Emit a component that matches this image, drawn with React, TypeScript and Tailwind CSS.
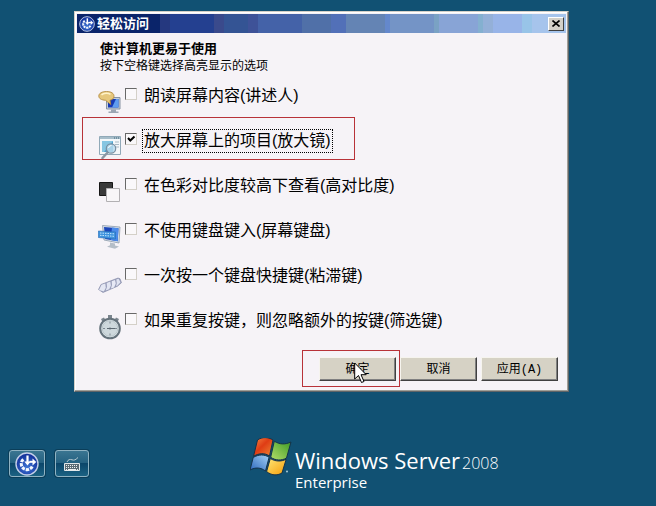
import { useState, type ReactNode } from "react";

function EaseEmblem({ id }: { id: string }) {
  return (
    <svg viewBox="0 0 24 24" className="size-full" aria-hidden="true">
      <defs>
        <radialGradient id={id} cx="50%" cy="65%" r="60%">
          <stop offset="0" stopColor="#3d74d4" />
          <stop offset="1" stopColor="#12309a" />
        </radialGradient>
      </defs>
      <circle cx="12" cy="12" r="11" fill={`url(#${id})`} stroke="#c3cfe8" strokeWidth="1.4" />
      <path d="M17.200 14.500A5.800 5.800 0 1 1 9 6.900" fill="none" stroke="#f4f8ff" strokeWidth="3" strokeDasharray="3.200 1" />
      <path d="M12.500 3.500v7" fill="none" stroke="#fff" strokeWidth="2.200" />
      <path d="M9.300 9.500h6.400l-3.200 4z" fill="#fff" />
      <path d="M14.500 9.800h4" stroke="#fff" strokeWidth="2" />
      <path d="M17.500 6.500 21.300 10l-3.800 3.500z" fill="#fff" />
    </svg>
  );
}

function NarratorIcon() {
  return (
    <svg viewBox="0 0 24 24" className="size-6" aria-hidden="true">
      <path d="M8.500 7.500h13.500v11.500H8.500z" fill="#c5cfda" stroke="#8793a3" />
      <path d="M10 9h10.500v8.500H10z" fill="#1739b5" />
      <path d="M14 17.500 18 9h2.500v8.500z" fill="#5f9cf0" />
      <path d="M13 19.500h5v2h2.500V23h-10v-1.500H13z" fill="#9ba6b3" />
      <path d="M8.500 1.500c5 0 7.500 2 7.500 4.700 0 2.500-2 3.700-4 4l.8 4.300-5.300-4.200C3.500 10 .8 8.700.8 6c0-2.800 3.200-4.500 7.700-4.500z" fill="#e6c77c" stroke="#b08738" strokeWidth=".8" />
      <path d="M3.500 5c2-2.200 7-2.200 9-.6" stroke="#fff2c8" strokeWidth="1.500" fill="none" />
    </svg>
  );
}

function MagnifierIcon() {
  return (
    <svg viewBox="0 0 24 24" className="size-6" aria-hidden="true">
      <path d="M1.500 1.500h21v18h-21z" fill="#f4f8fa" stroke="#91a9b8" />
      <path d="M2 2h20v2H2z" fill="#a7bdca" />
      <path d="M16 3h5" stroke="#3d6277" strokeDasharray="1 1" />
      <path d="M4 6h11v11H4z" fill="#4c9fcb" />
      <path d="M4 6h11L6 17H4z" fill="#86c6e2" />
      <path d="M17 7h4M17 9.500h4M17 12h4" stroke="#a9bac5" />
      <path d="m10 17-5.500 6" stroke="#8b98a5" strokeWidth="2.500" strokeLinecap="round" />
      <circle cx="13" cy="13.500" r="4.700" fill="#b8dcef" fillOpacity=".85" stroke="#788fa0" strokeWidth="1.200" />
      <path d="M10.500 13a3 3 0 0 1 3-2.500" stroke="#fff" fill="none" />
    </svg>
  );
}

function ContrastIcon() {
  return (
    <svg viewBox="0 0 24 24" className="size-6" aria-hidden="true">
      <path d="M1.500 2.500h13v13h-13z" fill="#3a3a3a" stroke="#161616" />
      <path d="M8.500 8.500h13v13h-13z" fill="#f8f6f8" stroke="#b2b0b3" />
    </svg>
  );
}

function ScreenKeyboardIcon() {
  return (
    <svg viewBox="0 0 24 24" className="size-6" aria-hidden="true">
      <path d="m4.500.5 17.500 1.500-1 16-15-3z" fill="#d5dee8" stroke="#8d9bab" strokeWidth=".8" />
      <path d="m6 2 14.500 1.200-.8 13-12.500-2.200z" fill="#1b46b9" />
      <path d="m14 2.600 6.500.6-.8 13-7-1.300z" fill="#4b8bea" />
      <path d="m12 17.500 5 1v2l4 1-4 2.300-8-2 3-1.500z" fill="#b4bdc7" />
      <path d="m.3 6 17.200 1v7L.3 12.500z" fill="#3f93dd" stroke="#2769b5" strokeWidth=".6" />
      <path d="m2 8 14 .8M2 10.300l14 1" stroke="#c5e6ff" strokeDasharray="1.500 1" />
    </svg>
  );
}

function StickyKeysIcon() {
  return (
    <svg viewBox="0 0 24 24" className="size-6" aria-hidden="true">
      <path d="M.5 19.500 3 14.500 20 8l2 .7 1.500 4-4 3.500L5 22.500z" fill="#9a9fbb" stroke="#8288a6" strokeWidth=".6" />
      <path d="m3.500 14.800 3.800-1.300.5 4.300-2 3.700-4.800-1.500z" fill="#e4e7f3" />
      <path d="m8.700 13 3.600-1.400.6 4-1.700 3.700-3.500 1.300 1.300-3.500z" fill="#e2e5f2" />
      <path d="m13.700 11.200 3.300-1.300.8 3.600-1.700 3.900-3.200 1.200 1.100-3.500z" fill="#e7e9f5" />
      <path d="m18.300 9.500 2.200-.8 2 3.500-3 3.300-1.400.7.700-3z" fill="#e0e3f1" />
    </svg>
  );
}

function StopwatchIcon() {
  return (
    <svg viewBox="0 0 24 26" className="h-[26px] w-6" aria-hidden="true">
      <path d="M10 0h4v4h-4zM3 4l3-1.500 1.500 2.500-3 2zM21 4l-3-1.500L16.500 5l3 2z" fill="#7a858d" />
      <circle cx="12" cy="13.500" r="9.800" fill="#dfe7ea" stroke="#65727b" strokeWidth="2" />
      <circle cx="12" cy="13.500" r="7.800" fill="#ced8dc" stroke="#aebac0" strokeWidth=".7" />
      <path d="M12 6.500v2M12 18.500v2M5 13.500h2M17 13.500h2" stroke="#7f8a92" />
      <path d="M9 13.500h8" stroke="#5d6972" />
      <circle cx="12" cy="13.500" r="1" fill="#5d6972" />
    </svg>
  );
}

function WindowsFlag() {
  return (
    <svg viewBox="0 0 42 38" className="h-[38px] w-[42px] shrink-0" aria-hidden="true">
      <defs>
        <linearGradient id="flag-red" x1="0" y1="0" x2="1" y2="1">
          <stop offset="0" stopColor="#f58a45" />
          <stop offset=".45" stopColor="#df3c14" />
          <stop offset="1" stopColor="#ee8a35" />
        </linearGradient>
        <linearGradient id="flag-green" x1="1" y1="0" x2="0" y2="1">
          <stop offset="0" stopColor="#3c9a26" />
          <stop offset="1" stopColor="#b4de69" />
        </linearGradient>
        <linearGradient id="flag-blue" x1="0" y1="1" x2="1" y2="0">
          <stop offset="0" stopColor="#2a66bd" />
          <stop offset="1" stopColor="#a5d2f5" />
        </linearGradient>
        <linearGradient id="flag-yellow" x1="1" y1="1" x2="0" y2="0">
          <stop offset="0" stopColor="#f59c08" />
          <stop offset="1" stopColor="#ffe878" />
        </linearGradient>
      </defs>
      <g stroke="#14324a" strokeWidth="1">
        <path d="M7.500 2C12-1.200 18-1.200 23 2L19.500 18c-4.800-3.300-10.300-3-16 .3z" fill="url(#flag-red)" />
        <path d="M24.300 3.200C29.500 6.500 35 6.800 41 4L36.500 20c-5 3-11 2.500-15.800-.7z" fill="url(#flag-green)" />
        <path d="M3.200 19.500c5.500-3.300 11-3.400 15.900-.2L15.500 33C11 29.500 5.500 29 0 32z" fill="url(#flag-blue)" />
        <path d="M20.300 20.500c5 3 10.700 3.400 15.900.7L32 35c-5 3-11 2.300-15.400-1.500z" fill="url(#flag-yellow)" />
      </g>
      <circle cx="37" cy="33.500" r="1" fill="#a9cbd8" />
    </svg>
  );
}

function SmallKeyboard() {
  return (
    <svg viewBox="0 0 16 16" className="size-4" aria-hidden="true">
      <path d="M3 6c1-2.500 3-3 5-2.200S11.500 4 14 1.500" fill="none" stroke="#b7cad2" />
      <path d="M.5 7.500h15v7H.5z" fill="#5b6b74" stroke="#e3e8ea" />
      <path d="M2 9.500h12M2 11.500h12" stroke="#eef1f2" strokeDasharray="1 1" />
      <path d="M2 13.500h1m1 0h8m1 0h1" stroke="#eef1f2" />
    </svg>
  );
}

function Cursor() {
  return (
    <svg viewBox="0 0 14 22" className="pointer-events-none absolute left-[35px] top-[5px] h-[22px] w-3.5" aria-hidden="true">
      <path d="M.7 1v16l3.800-3.500 3 7 2.500-1-3-6.800h5.200z" fill="#fff" stroke="#000" />
    </svg>
  );
}

const options: { id: string; label: string; icon: ReactNode }[] = [
  { id: "narrator", label: "朗读屏幕内容(讲述人)", icon: <NarratorIcon /> },
  { id: "magnifier", label: "放大屏幕上的项目(放大镜)", icon: <MagnifierIcon /> },
  { id: "contrast", label: "在色彩对比度较高下查看(高对比度)", icon: <ContrastIcon /> },
  { id: "keyboard", label: "不使用键盘键入(屏幕键盘)", icon: <ScreenKeyboardIcon /> },
  { id: "sticky", label: "一次按一个键盘快捷键(粘滞键)", icon: <StickyKeysIcon /> },
  { id: "filter", label: "如果重复按键，则忽略额外的按键(筛选键)", icon: <StopwatchIcon /> },
];

const buttonStyle =
  "block h-6 w-[77px] border border-t-[#f6f4ee] border-l-[#f6f4ee] border-r-[#404040] border-b-[#404040] bg-[#d6d2c5] text-xs text-black shadow-[inset_-1px_-1px_0_#808080]";

const trayButtonStyle =
  "grid h-[27px] place-items-center rounded-[3px] border border-[#8fb3c3] bg-[linear-gradient(180deg,#3a7591_0%,#236080_50%,#0b466a_50%,#1b6283_100%)] shadow-[0_0_0_1px_#0b3e59]";

function OptionRow({ id, label, icon }: { id: string; label: string; icon: ReactNode }) {
  const [checked, setChecked] = useState(id === "magnifier");
  return (
    <li className="relative flex h-[45px] items-start">
      <span className="mt-1.5 w-[27px] shrink-0">{icon}</span>
      <span className="relative mt-1 size-3 shrink-0">
        <input
          id={id}
          type="checkbox"
          checked={checked}
          onChange={(e) => setChecked(e.target.checked)}
          className="block size-3 appearance-none border border-b-[#d4d0c8] border-l-[#686868] border-r-[#d4d0c8] border-t-[#686868] bg-[#faf8fa]"
        />
        {checked && (
          <svg viewBox="0 0 12 12" className="pointer-events-none absolute inset-0 size-3" aria-hidden="true">
            <path d="m3 5 2.300 2.500L9.500 3.500" fill="none" stroke="#000" strokeWidth="2" />
          </svg>
        )}
      </span>
      <label
        htmlFor={id}
        className={`ml-[5px] border px-px text-base leading-[22px] whitespace-nowrap ${
          id === "magnifier" ? "border-dotted border-black" : "border-transparent"
        }`}
      >
        {label}
      </label>
      {id === "magnifier" && (
        <span className="pointer-events-none absolute -left-4 -top-3 h-[43px] w-[273px] border border-[#b83238]" />
      )}
    </li>
  );
}

export default function App() {
  return (
    <div className="flex min-h-screen flex-col bg-[#115173] font-['Liberation_Sans','Noto_Sans_CJK_SC',sans-serif] text-black">
      <main className="pr-[87px] pl-[74px] pt-[11px]">
        <section
          aria-labelledby="dialog-title"
          className="border border-b-[#5f6467] border-l-[#d4d0c8] border-r-[#5f6467] border-t-[#d4d0c8] bg-[#f6f3f7] shadow-[inset_-1px_-1px_0_#a19f98,inset_1px_1px_0_#fff]"
        >
          <header className="mx-0.5 mt-0.5 flex h-[19px] items-center bg-[linear-gradient(90deg,#0a246a_0_17%,#25387f_17%_19%,#244090_19%_28%,#3a4a8c_28%_30%,#345494_30%_35%,#3e5298_35%_37%,#4462a8_37%_46%,#5070a8_46%_52%,#5270b8_52%_55%,#6484b4_55%_63%,#6488cc_63%_64%,#7494c6_64%_73%,#7aa2c4_73%_74%,#88a4d6_74%_82%,#84b0d0_82%_83%,#94b0d8_83%_85%,#98b4e8_85%_91%,#98c4e8_91%_93%,#a6c4ec_93%)] pr-0.5 pl-0.5">
            <span className="size-4">
              <EaseEmblem id="emblem-title" />
            </span>
            <h1 id="dialog-title" className="ml-0.5 text-[13px] leading-[19px] font-bold text-white">
              轻松访问
            </h1>
            <button
              type="button"
              aria-label="关闭"
              className="ml-auto grid h-3.5 w-4 place-items-center border border-t-white border-l-white border-r-[#404040] border-b-[#404040] bg-[#d4d0c8]"
            >
              <svg viewBox="0 0 8 7" className="h-[7px] w-2" aria-hidden="true">
                <path d="m.5.500 7 6m0-6-7 6" stroke="#000" strokeWidth="1.600" />
              </svg>
            </button>
          </header>
          <div className="pt-2 pr-2.5 pb-2.5 pl-[23px]">
            <div className="pl-0.5">
              <h2 className="text-[13px] leading-4 font-bold">使计算机更易于使用</h2>
              <p className="text-xs leading-[19px]">按下空格键选择高亮显示的选项</p>
            </div>
            <ul className="mt-2">
              {options.map((option) => (
                <OptionRow key={option.id} {...option} />
              ))}
            </ul>
            <div className="mt-[3px] flex justify-end gap-1">
              <div className="relative">
                <button type="button" className={buttonStyle}>
                  确定
                </button>
                <Cursor />
                <span className="pointer-events-none absolute -left-[17px] -top-[7px] h-[37px] w-[98px] border border-[#b83238]" />
              </div>
              <button type="button" className={buttonStyle}>
                取消
              </button>
              <button type="button" className={buttonStyle}>
                应用<span className="font-['Liberation_Mono',monospace]">(A)</span>
              </button>
            </div>
          </div>
        </section>
      </main>
      <footer className="mt-auto flex items-start pb-3.5 pl-[9px]">
        <nav className="mt-3 flex gap-2.5">
          <button type="button" aria-label="轻松访问" className={`${trayButtonStyle} w-9`}>
            <span className="size-6">
              <EaseEmblem id="emblem-footer" />
            </span>
          </button>
          <button type="button" aria-label="屏幕键盘" className={`${trayButtonStyle} w-[34px]`}>
            <SmallKeyboard />
          </button>
        </nav>
        <div className="ml-[161px] flex font-['Open_Sans','Noto_Sans',sans-serif] text-white">
          <WindowsFlag />
          <div className="ml-[3px] pt-2.5">
            <p className="text-[22px] leading-6 whitespace-nowrap">
              Windows Server<span className="ml-0.5 text-base leading-none font-light">2008</span>
            </p>
            <p className="text-[15px] leading-5">Enterprise</p>
          </div>
        </div>
      </footer>
    </div>
  );
}
